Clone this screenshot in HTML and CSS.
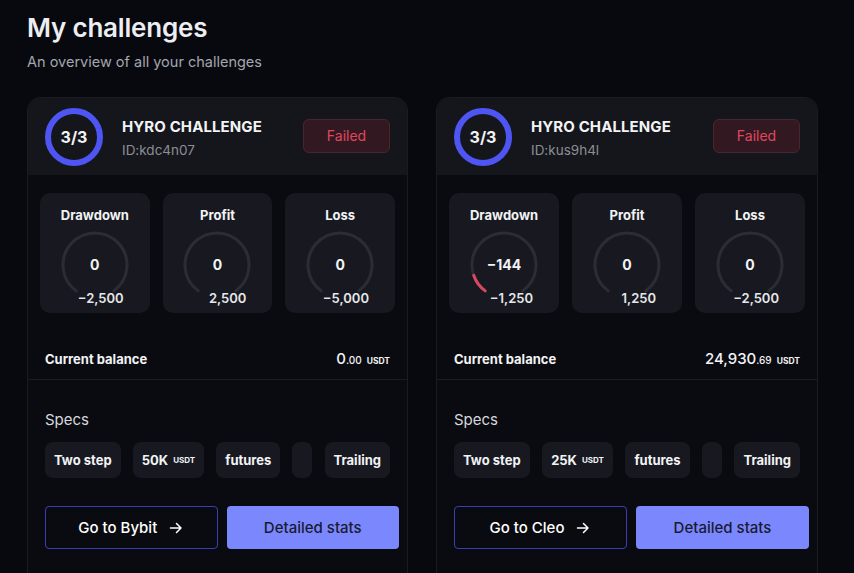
FILE: index.html
```html
<html>
<head>
<meta charset="UTF-8">
<title>My challenges</title>
<meta name="viewport" content="width=device-width,initial-scale=1">
<link rel="stylesheet" href="styles.css">
</head>
<body>
<div class="page">
	<h1 class="pageTitle">My challenges</h1>
	<p class="pageSub">An overview of all your challenges</p>

	<div class="cardGrid">

		<!-- challenge 1 -->
		<div class="card">
			<div class="cardHead">
				<div class="ring">3/3</div>
				<div class="headText">
					<div class="chName">HYRO CHALLENGE</div>
					<div class="chId">ID:kdc4n07</div>
				</div>
				<div class="badgeFailed">Failed</div>
			</div>
			<div class="stats">
				<div class="statBox">
					<div class="statLabel">Drawdown</div>
					<div class="gauge">
						<svg width="70" height="70" viewBox="0 0 70 70"><path d="M16.2 60.9 A32 32 0 1 1 53.8 60.9" fill="none" stroke="#2b2d35" stroke-width="3" stroke-linecap="round"/></svg>
						<span class="gaugeVal">0</span>
					</div>
					<div class="gaugeLimit">−2,500</div>
				</div>
				<div class="statBox">
					<div class="statLabel">Profit</div>
					<div class="gauge">
						<svg width="70" height="70" viewBox="0 0 70 70"><path d="M16.2 60.9 A32 32 0 1 1 53.8 60.9" fill="none" stroke="#2b2d35" stroke-width="3" stroke-linecap="round"/></svg>
						<span class="gaugeVal">0</span>
					</div>
					<div class="gaugeLimit">2,500</div>
				</div>
				<div class="statBox">
					<div class="statLabel">Loss</div>
					<div class="gauge">
						<svg width="70" height="70" viewBox="0 0 70 70"><path d="M16.2 60.9 A32 32 0 1 1 53.8 60.9" fill="none" stroke="#2b2d35" stroke-width="3" stroke-linecap="round"/></svg>
						<span class="gaugeVal">0</span>
					</div>
					<div class="gaugeLimit">−5,000</div>
				</div>
			</div>
			<div class="balanceRow">
				<span class="balLabel">Current balance</span>
				<span class="balValue">0<small>.00</small><em>USDT</em></span>
			</div>
			<div class="specs">
				<div class="specsTitle">Specs</div>
				<div class="chips">
					<span class="chip">Two step</span>
					<span class="chip">50K <sup>USDT</sup></span>
					<span class="chip">futures</span>
					<span class="chip chipEmpty"></span>
					<span class="chip">Trailing</span>
				</div>
			</div>
			<div class="actions">
				<a class="btnOutline" href="#">Go to Bybit
					<svg width="16" height="16" viewBox="0 0 16 16"><path d="M2.5 8h10.5M8.5 3.5 13 8l-4.5 4.5" fill="none" stroke="#fff" stroke-width="1.5" stroke-linecap="round" stroke-linejoin="round"/></svg>
				</a>
				<a class="btnFill" href="#">Detailed stats</a>
			</div>
		</div>

		<!-- challenge 2 -->
		<div class="card">
			<div class="cardHead">
				<div class="ring">3/3</div>
				<div class="headText">
					<div class="chName">HYRO CHALLENGE</div>
					<div class="chId">ID:kus9h4l</div>
				</div>
				<div class="badgeFailed">Failed</div>
			</div>
			<div class="stats">
				<div class="statBox">
					<div class="statLabel">Drawdown</div>
					<div class="gauge">
						<svg width="70" height="70" viewBox="0 0 70 70"><path d="M16.2 60.9 A32 32 0 1 1 53.8 60.9" fill="none" stroke="#2b2d35" stroke-width="3" stroke-linecap="round"/><path d="M16.2 60.9 A32 32 0 0 1 4.7 45.3" fill="none" stroke="#d8485f" stroke-width="3" stroke-linecap="round"/></svg>
						<span class="gaugeVal">−144</span>
					</div>
					<div class="gaugeLimit">−1,250</div>
				</div>
				<div class="statBox">
					<div class="statLabel">Profit</div>
					<div class="gauge">
						<svg width="70" height="70" viewBox="0 0 70 70"><path d="M16.2 60.9 A32 32 0 1 1 53.8 60.9" fill="none" stroke="#2b2d35" stroke-width="3" stroke-linecap="round"/></svg>
						<span class="gaugeVal">0</span>
					</div>
					<div class="gaugeLimit">1,250</div>
				</div>
				<div class="statBox">
					<div class="statLabel">Loss</div>
					<div class="gauge">
						<svg width="70" height="70" viewBox="0 0 70 70"><path d="M16.2 60.9 A32 32 0 1 1 53.8 60.9" fill="none" stroke="#2b2d35" stroke-width="3" stroke-linecap="round"/></svg>
						<span class="gaugeVal">0</span>
					</div>
					<div class="gaugeLimit">−2,500</div>
				</div>
			</div>
			<div class="balanceRow">
				<span class="balLabel">Current balance</span>
				<span class="balValue">24,930<small>.69</small><em>USDT</em></span>
			</div>
			<div class="specs">
				<div class="specsTitle">Specs</div>
				<div class="chips">
					<span class="chip">Two step</span>
					<span class="chip">25K <sup>USDT</sup></span>
					<span class="chip">futures</span>
					<span class="chip chipEmpty"></span>
					<span class="chip">Trailing</span>
				</div>
			</div>
			<div class="actions">
				<a class="btnOutline" href="#">Go to Cleo
					<svg width="16" height="16" viewBox="0 0 16 16"><path d="M2.5 8h10.5M8.5 3.5 13 8l-4.5 4.5" fill="none" stroke="#fff" stroke-width="1.5" stroke-linecap="round" stroke-linejoin="round"/></svg>
				</a>
				<a class="btnFill" href="#">Detailed stats</a>
			</div>
		</div>

	</div>
</div>
</body>
</html>
```

FILE: styles.css
```css
html, body{
	margin:0;
	height:100%;
	overflow:hidden;
}

body{
	background:#08090e;
	color:#f2f3f5;
	font-family:Inter, "Noto Sans", sans-serif;
}

.page{
	padding:12px 36px 0 27px;
}

.pageTitle{
	margin:0;
	font-size:26px;
	font-weight:600;
	line-height:32px;
	letter-spacing:-0.2px;
	color:#eceef2;
}

.pageSub{
	margin:8px 0 0;
	font-size:14.5px;
	line-height:20px;
	color:#a3a6ae;
}

.cardGrid{
	display:grid;
	grid-template-columns:381px 382px;
	gap:28px;
	margin-top:25px;
}

.card{
	background:#0a0b10;
	border:1px solid #1a1b22;
	border-bottom:none;
	border-radius:14px 14px 0 0;
	overflow:hidden;
}

/* header */
.cardHead{
	display:flex;
	align-items:center;
	background:#15161b;
	padding:10px 17px 9px;
}

.ring{
	width:46px;
	height:46px;
	border:6px solid #4f55f2;
	border-radius:50%;
	display:flex;
	align-items:center;
	justify-content:center;
	font-size:16px;
	font-weight:700;
}

.headText{
	margin-left:19px;
	padding-top:3px;
}

.chName{
	font-size:15px;
	font-weight:700;
	line-height:20px;
	letter-spacing:0.1px;
}

.chId{
	margin-top:3px;
	font-size:13.5px;
	line-height:20px;
	color:#8b8e97;
}

.badgeFailed{
	margin-left:auto;
	width:85px;
	height:32px;
	border:1px solid #4a2530;
	background:#321921;
	border-radius:6px;
	color:#e0475f;
	font-size:14px;
	display:flex;
	align-items:center;
	justify-content:center;
	margin-top:-3px;
}

/* stat gauges */
.stats{
	display:grid;
	grid-template-columns:repeat(3, 1fr);
	gap:13px;
	padding:18px 12px 0;
}

.statBox{
	background:#181920;
	border-radius:10px;
	padding:14px 0 7px;
	display:flex;
	flex-direction:column;
	align-items:center;
}

.statLabel{
	font-size:13px;
	font-weight:700;
	line-height:16px;
}

.gauge{
	position:relative;
	width:70px;
	height:70px;
	margin-top:7px;
}

.gauge svg{
	display:block;
}

.gaugeVal{
	position:absolute;
	left:0;
	right:0;
	top:26px;
	text-align:center;
	font-size:14px;
	font-weight:700;
	line-height:18px;
}

.gaugeLimit{
	align-self:flex-end;
	margin:-10px 26px 0 0;
	font-size:13px;
	font-weight:600;
	line-height:16px;
	color:#e6e7ea;
}

/* balance */
.balanceRow{
	display:flex;
	justify-content:space-between;
	align-items:baseline;
	padding:36px 17px 8px 17px;
	border-bottom:1px solid #1c1d24;
	line-height:20px;
}

.balLabel{
	font-size:13px;
	font-weight:700;
}

.balValue{
	font-size:15px;
	font-weight:500;
}

.balValue small{
	font-size:10px;
}

.balValue em{
	font-style:normal;
	font-size:8.5px;
	font-weight:700;
	margin-left:5px;
}

/* specs */
.specs{
	padding:30px 17px 0 17px;
}

.specsTitle{
	font-size:15px;
	line-height:20px;
	color:#d6d8dd;
}

.chips{
	display:flex;
	justify-content:space-between;
	margin-top:12px;
}

.chip{
	height:36px;
	padding:0 9px;
	background:#181920;
	border-radius:8px;
	display:flex;
	align-items:center;
	font-size:13px;
	font-weight:700;
}

.chip sup{
	font-size:8px;
	margin-left:5px;
	vertical-align:4px;
}

.chipEmpty{
	width:2px;
}

/* buttons */
.actions{
	display:grid;
	grid-template-columns:1fr 1fr;
	gap:9px;
	padding:28px 8px 24px 17px;
}

.btnOutline, .btnFill{
	height:43px;
	box-sizing:border-box;
	border-radius:4px;
	display:flex;
	align-items:center;
	justify-content:center;
	font-size:15px;
	font-weight:500;
	text-decoration:none;
}

.btnOutline{
	border:1px solid #3a3eb6;
	color:#ffffff;
	gap:11px;
}

.btnFill{
	background:#7b88fd;
	color:#181a33;
}
```
